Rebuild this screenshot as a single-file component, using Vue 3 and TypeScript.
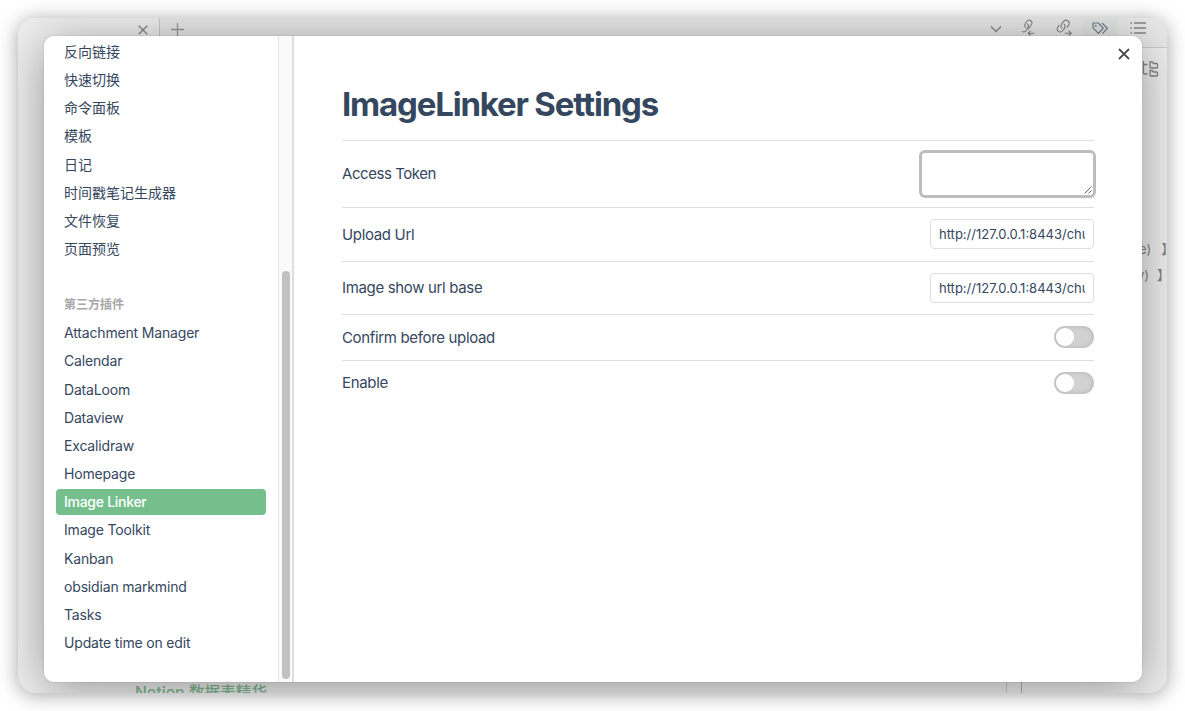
<script setup lang="ts">
import { ref } from 'vue'

interface TextSetting {
  name: string
  value: string
}
interface ToggleSetting {
  name: string
  on: boolean
}

const corePlugins: string[] = ['反向链接', '快速切换', '命令面板', '模板', '日记', '时间戳笔记生成器', '文件恢复', '页面预览']
const communityPlugins: string[] = [
  'Attachment Manager', 'Calendar', 'DataLoom', 'Dataview', 'Excalidraw', 'Homepage',
  'Image Linker', 'Image Toolkit', 'Kanban', 'obsidian markmind', 'Tasks', 'Update time on edit',
]
const active = ref('Image Linker')
const token = ref('')
const urls = ref<TextSetting[]>([
  { name: 'Upload Url', value: 'http://127.0.0.1:8443/chu' },
  { name: 'Image show url base', value: 'http://127.0.0.1:8443/chu' },
])
const toggles = ref<ToggleSetting[]>([
  { name: 'Confirm before upload', on: false },
  { name: 'Enable', on: false },
])
</script>

<template>
  <div class="stage">
    <div class="window">
      <header class="tabbar">
        <div class="tab">
          <svg width="10" height="10" viewBox="0 0 10 10"><path d="M.7.7l8.6 8.6M9.3.7L.7 9.3" /></svg>
        </div>
        <svg class="plus" width="13" height="13" viewBox="0 0 13 13"><path d="M6.5 0v13M0 6.5h13" /></svg>
        <div class="tools">
          <svg class="chev" width="12" height="8" viewBox="0 0 12 8"><path d="M1 1.5l5 5 5-5" /></svg>
          <svg class="link" width="16" height="17" viewBox="0 0 16 17">
            <path d="M5.600 8.700C4.400 7.500 4.500 6 5.400 4.500l.9-1.500C7.500 1.100 9.200.6 10.600 1.500s1.700 2.600.7 4.300L9.800 8.300Q9 9.600 7.600 9.900" />
            <path d="M7.300 4.600c1.400 1 1.500 2.500.6 4L6.400 11.200c-1.100 1.700-2.800 2.200-4.200 1.200" />
            <path d="M14.300 14.200H8.300M10.600 11.900l-2.400 2.300 2.400 2.300" />
          </svg>
          <svg class="link" width="16" height="17" viewBox="0 0 16 17">
            <path d="M6.200 9.200C4.700 8 4.700 6.300 5.900 4.700l1.300-1.800C8.500 1.100 10.300.7 11.900 1.800s1.800 2.900.6 4.600L10.900 8.600" />
            <path d="M7.900 5.200c1.400 1.100 1.500 2.800.3 4.400l-1.200 1.700c-1.300 1.800-3.100 2.200-4.600 1.100S.7 9.500 1.900 7.900l1.300-1.700" />
            <path d="M8.800 14.200h6.300M12.800 11.900l2.400 2.300-2.400 2.300" />
          </svg>
          <span class="hot">
            <svg width="17" height="13" viewBox="0 0 17 13">
              <path d="M1 1h5.200l5 5.100-4.700 5.300L1 5.900z" stroke-linejoin="round" /><path d="M10 1l5.300 5.300-4.800 5.400" /><circle cx="3.700" cy="3.700" r=".4" />
            </svg>
          </span>
          <svg class="list" width="16" height="12" viewBox="0 0 16 12">
            <path d="M4 1h12M4 6h12M4 11h12" /><path d="M.5 1H2M.5 6H2M.5 11H2" />
          </svg>
        </div>
      </header>
      <div class="workspace">
        <div class="editor"><p>Notion 数据表精华</p></div>
        <div class="gutter"></div>
        <aside class="outline">
          <svg width="17" height="17" viewBox="0 0 17 17">
            <path d="M1.500 0v12q0 1 1 1h3M1.500 3.500h4" />
            <path d="M8 1h2.300l1.300 1.500h3q.9 0 .9.900v2.800q0 .8-.9.800H8.900Q8 7 8 6.200zM8 9.500h2.300l1.300 1.500h3q.9 0 .9.900v2.300q0 .8-.9.800H8.900q-.9 0-.9-.8z" />
          </svg>
          <p class="l1"><span>e)</span><span>】</span></p>
          <p class="l2"><span>y)</span><span>】</span></p>
        </aside>
      </div>
      <div class="cast"></div>
    </div>

    <section class="modal">
      <nav class="sidebar">
        <ul class="menu">
          <li v-for="p in corePlugins" :key="p">{{ p }}</li>
        </ul>
        <h2>第三方插件</h2>
        <ul class="menu">
          <li v-for="p in communityPlugins" :key="p" class="latin" :class="{ active: p === active }" @click="active = p">{{ p }}</li>
        </ul>
      </nav>
      <div class="scroll"><div class="thumb"></div></div>
      <main class="content">
        <h1>ImageLinker Settings</h1>
        <div class="row first">
          <span>Access Token</span>
          <div class="area">
            <textarea v-model="token"></textarea>
            <svg class="grip" width="8" height="8" viewBox="0 0 8 8"><path d="M.5 7.500l7-7M4.500 7.500l3-3" /></svg>
          </div>
        </div>
        <div v-for="(u, i) in urls" :key="u.name" class="row" :class="'url' + i">
          <span>{{ u.name }}</span><input v-model="u.value" type="text" spellcheck="false" />
        </div>
        <div v-for="t in toggles" :key="t.name" class="row flip">
          <span>{{ t.name }}</span>
          <button class="toggle" :class="{ on: t.on }" @click="t.on = !t.on"><i></i></button>
        </div>
      </main>
      <svg class="close" width="12" height="12" viewBox="0 0 12 12"><path d="M1 1l10 10M11 1L1 11" /></svg>
    </section>
  </div>
</template>

<style>
html, body { margin: 0; overflow: hidden; background: #fff; }
</style>

<style scoped>
* { box-sizing: border-box; }
p, h1, h2, ul { margin: 0; padding: 0; }
svg { display: block; flex: none; fill: none; stroke: #858585; stroke-width: 1.3; }
.stage {
  position: relative; width: 1185px; height: 711px; padding: 18px; overflow: hidden;
  font-family: Inter, "Noto Sans CJK SC", sans-serif; color: #35475e;
}
.window {
  position: relative; width: 1149px; height: 675px; border-radius: 18px; overflow: hidden;
  background: #efefef; box-shadow: 0 2px 20px rgba(0, 0, 0, .37); display: flex; flex-direction: column;
}
.tabbar { height: 30px; flex: none; display: flex; background: #e9e9e9; }
.tab { width: 142px; border-right: 1px solid #c8c8c8; background: #efefef; padding: 7px 0 0 120px; }
.plus { margin: 5px 0 0 11px; stroke: #989898; }
.tools { display: flex; flex: 1; justify-content: flex-end; margin-left: -1px; padding-right: 21px; border-bottom: 1px solid #cdcdcd; }
.chev { margin: 7px 18px 0 0; }
.link { margin: 1px 20px 0 0; stroke-width: 1.1; }
.hot { width: 34px; height: 29px; margin-left: -9px; padding: 4px 0 0 9px; background: #e3e6e4; }
.hot svg { stroke: #6e7a8c; stroke-width: 1.2; }
.list { margin: 4px 0 0 13px; }
.workspace { flex: 1; display: flex; min-height: 0; }
.editor { width: 988px; display: flex; align-items: flex-end; padding: 0 0 0 117px; }
.editor p { height: 10px; line-height: 20px; font-size: 15.700px; font-weight: 500; color: #7fb892; white-space: nowrap; }
.gutter { width: 16px; border-left: 1px solid #ccc; border-right: 1px solid #b4b4b4; }
.outline { flex: 1; display: flex; flex-direction: column; align-items: flex-end; font-size: 13px; color: #838383; }
.outline svg { margin: 13px 8px 0 0; }
.outline p { display: flex; gap: 10px; line-height: 26px; width: 28px; }
.outline .l1 { margin-top: 158px; }
.outline .l2 { width: 30px; gap: 8px; }
.cast {
  position: absolute; left: 26px; top: 18px; width: 1098px; height: 646px; border-radius: 10px;
  box-shadow: 0 7px 50px rgba(0, 0, 0, .38), 0 0 1px 1px rgba(0, 0, 0, .06);
}
.modal {
  position: absolute; left: 44px; top: 36px; width: 1098px; height: 646px; border-radius: 10px;
  overflow: hidden; background: #fff; display: flex;
}
.sidebar { width: 234px; padding: 3px 12px 0; flex: none; }
.menu { list-style: none; display: flex; flex-direction: column; gap: 2px; }
.menu li { height: 26.160px; line-height: 26px; padding-left: 8px; border-radius: 4px; font-size: 14px; white-space: nowrap; }
.menu .latin { letter-spacing: -.17px; }
.menu .active { background: #75bf8d; color: #fff; font-weight: 500; letter-spacing: -.28px; }
h2 { margin: 33px 0 5px; padding-left: 8px; height: 20px; line-height: 20px; font-size: 12px; font-weight: 700; color: #a7a7a7; }
.scroll { width: 16px; flex: none; background: #fafafa; border-left: 1px solid #e5e5e5; border-right: 2px solid #dedede; padding: 235px 0 0 3px; }
.thumb { width: 8px; height: 408px; border-radius: 4px; background: #c1c1c1; }
.content { flex: 1; padding: 47px 48px 0; }
h1 { height: 57px; line-height: 42px; font-size: 33px; font-weight: 700; letter-spacing: -1.18px; white-space: nowrap; }
.row { height: 53px; border-top: 1px solid #dfdfdf; display: flex; align-items: center; justify-content: space-between; font-size: 15px; letter-spacing: -.34px; }
.row.first { height: 67px; }
.row.first > span { padding-bottom: 2px; letter-spacing: -.45px; }
.row.url0 { height: 54px; }
.row.url0 input { margin-bottom: 1px; }
.row.url1 > span { padding-bottom: 2px; }
.row.flip { height: 46px; padding-bottom: 1px; }
.row.flip:last-child > span { padding-bottom: 2px; }
.area { position: relative; width: 177px; height: 48px; margin-right: -2px; }
textarea { display: block; width: 177px; height: 48px; border: 3px solid #bdbdbd; border-radius: 6px; resize: none; outline: none; background: #fff; }
.grip { position: absolute; right: 4px; bottom: 4px; stroke: #555; stroke-width: .9; }
input { width: 164px; height: 30px; padding: 0 8px; border: 1px solid #dedede; border-radius: 4px; background: #fff; font: 13px Inter, sans-serif; color: #35475e; outline: none; }
.toggle { width: 40px; height: 22px; padding: 2px; border: 0; border-radius: 11px; background: #d2d2d2; box-shadow: inset 0 0 5px 1px rgba(0, 0, 0, .11); display: flex; }
.toggle.on { justify-content: flex-end; background: #75bf8d; }
.toggle i { width: 18px; height: 18px; border-radius: 50%; background: #fff; }
.close { position: absolute; right: 12px; top: 12px; stroke: #4c4c4c; stroke-width: 1.800; }
</style>
